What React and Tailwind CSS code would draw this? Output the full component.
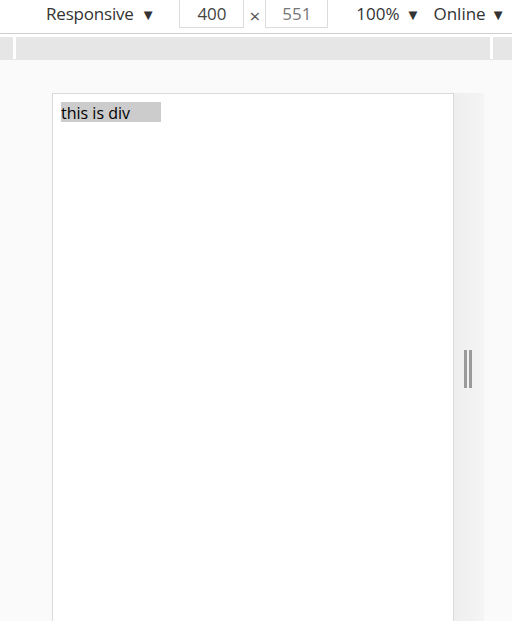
export default function App() {
  const font = { fontFamily: '"Open Sans", "Noto Sans", sans-serif' };
  return (
    <div className="w-[512px] h-[621px] overflow-hidden bg-[#fafafa] flex flex-col" style={font}>
      <div className="h-[34px] shrink-0 bg-white border-b border-[#cfcfcf] flex items-start text-[17px] text-[#333]">
        <div className="ml-[46px] mt-[3px] flex items-center leading-[22px]">
          <span className="tracking-[-0.2px]">Responsive</span>
          <span className="ml-[7px] text-[15px]">▼</span>
        </div>
        <div className="ml-[24px] -mt-px w-[65px] h-[29px] border border-[#dcdcdc] bg-white flex items-center justify-center text-[#444] leading-[22px]">400</div>
        <span className="ml-[5px] mt-[5px] text-[19px] text-[#555] leading-[22px]">×</span>
        <div className="ml-[5px] -mt-px w-[63px] h-[29px] border border-[#dcdcdc] bg-white flex items-center justify-center text-[#777] leading-[22px]">551</div>
        <div className="ml-[28px] mt-[3px] flex items-center leading-[22px]">
          <span>100%</span>
          <span className="ml-[6px] text-[15px]">▼</span>
        </div>
        <div className="ml-[13px] mt-[3px] flex items-center leading-[22px]">
          <span>Online</span>
          <span className="ml-[5px] text-[15px]">▼</span>
        </div>
      </div>
      <div className="h-[3px] shrink-0 bg-white" />
      <div className="h-[23px] shrink-0 bg-[#e6e6e6] flex">
        <div className="ml-[13px] w-[3px] h-[22px] bg-white" />
        <div className="ml-[474px] w-[3px] h-[22px] bg-white" />
      </div>
      <div className="flex pl-[52px] pt-[33px]">
        <div className="w-[402px] h-[600px] shrink-0 border border-[#dadada] bg-white p-[8px]">
          <div className="w-[100px] h-[20px] bg-[#cccccc] text-[16px] leading-[22px] text-black">this is div</div>
        </div>
        <div className="w-[30px] h-[600px] shrink-0 bg-gradient-to-r from-[#eeeeee] to-[#f5f5f5] flex pt-[257px] pl-[10px] gap-[2px]">
          <div className="w-[3px] h-[38px] bg-[#9a9a9a]" />
          <div className="w-[3px] h-[38px] bg-[#9a9a9a]" />
        </div>
      </div>
    </div>
  );
}
